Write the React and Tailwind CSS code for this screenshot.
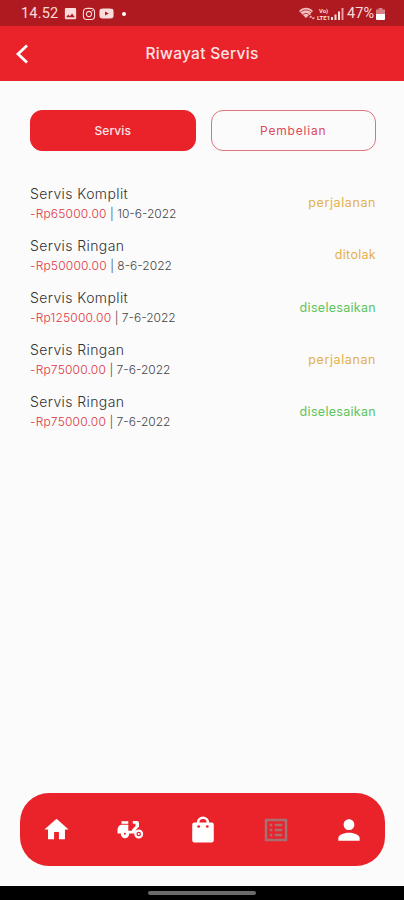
import React, { useState } from 'react';
import { MdHome, MdPerson, MdListAlt, MdImage } from 'react-icons/md';
import { FaInstagram, FaYoutube } from 'react-icons/fa';

const services = [
  { id: 1, name: 'Servis Komplit', price: '-Rp65000.00', date: '10-6-2022', status: 'perjalanan' },
  { id: 2, name: 'Servis Ringan', price: '-Rp50000.00', date: '8-6-2022', status: 'ditolak' },
  { id: 3, name: 'Servis Komplit', price: '-Rp125000.00', date: '7-6-2022', status: 'diselesaikan' },
  { id: 4, name: 'Servis Ringan', price: '-Rp75000.00', date: '7-6-2022', status: 'perjalanan' },
  { id: 5, name: 'Servis Ringan', price: '-Rp75000.00', date: '7-6-2022', status: 'diselesaikan' },
];

const statusStyle = {
  perjalanan: 'text-[#e3b04b] tracking-[0.6px]',
  ditolak: 'text-[#e3b04b] tracking-[0.3px]',
  diselesaikan: 'text-[#5cc45c] tracking-[0.3px]',
};

const ScooterIcon = () => (
  <svg className="w-[28px] h-[20px]" viewBox="0 0 28 20" fill="none">
    <path d="M5.500 1.200h6.800v2.600H5.500z" fill="white" />
    <path d="M5 4.800h7.300v6h3.400c.6-1.800 2.200-3.200 3.800-4.500V3.800h-2.700V1h4c1.400 0 2.200.8 2.200 2.200v3.600c-2.200 1.500-3.600 3.400-4.300 6.600H1.500V10C1.500 7.500 2.800 5.500 5 4.800z" fill="white" />
    <circle cx="9" cy="14" r="4.200" fill="white" />
    <circle cx="8.900" cy="13.800" r="1" fill="#ea232b" />
    <circle cx="22.700" cy="14" r="3.400" fill="#ea232b" stroke="white" strokeWidth="2.200" />
    <circle cx="22.700" cy="14" r="1.100" fill="white" />
  </svg>
);

const BagIcon = () => (
  <svg className="w-[28px] h-[30px]" viewBox="0 0 26 30" preserveAspectRatio="none" fill="none">
    <path d="M8.500 9V7.300a4.500 4.500 0 0 1 9 0V9" stroke="white" strokeWidth="2.400" />
    <path d="M5 7.500h16a2 2 0 0 1 2 2V25.500a2 2 0 0 1-2 2H5a2 2 0 0 1-2-2V9.500a2 2 0 0 1 2-2z" fill="white" />
    <circle cx="9" cy="11.500" r="1.300" fill="#ea232b" />
    <circle cx="17" cy="11.500" r="1.300" fill="#ea232b" />
  </svg>
);

const StatusBar = () => (
  <div className="h-[26px] bg-[#ae1a1f] flex items-center justify-between pl-[21px] pr-[19px] text-[#fbdcdc] font-[Roboto]">
    <div className="flex items-center pt-px">
      <span className="w-[42px] text-[14.5px] leading-[18px] tracking-[0.2px]">14.52</span>
      <MdImage className="w-[15px] h-[15px]" />
      <FaInstagram className="w-[14px] h-[14px] ml-[4px]" />
      <FaYoutube className="w-[15px] h-[15px] ml-[3px]" />
      <span className="w-[4px] h-[4px] rounded-full bg-white ml-[8px]" />
    </div>
    <div className="flex items-center pt-px">
      <svg className="w-[17px] h-[14px]" viewBox="0 0 17 14" fill="currentColor">
        <path d="M0 4C4-.3 10-.3 14 4l-2.500 2.600V8H10l-3 3z" opacity=".85" />
        <path d="M1.500 5.200c3.400-3 7.600-3 11 0M4 7.500c2-1.500 4-1.500 6 0" stroke="#ae1a1f" strokeWidth=".8" fill="none" />
        <path d="M10 10.500l2-2 1 2h3l-2 2-1-2z" />
      </svg>
      <span className="w-[15px] flex flex-col items-center text-[6px] leading-[7px] font-bold">
        <span>Vo)</span>
        <span>LTE1</span>
      </span>
      <svg className="w-[13px] h-[12px]" viewBox="0 0 13 12" fill="currentColor">
        <path d="M0 9h2v3H0zM3.500 6.500h2V12h-2zM7 3.500h2V12H7z" />
        <path d="M10.500 0h2v12h-2z" opacity=".7" />
      </svg>
      <span className="text-[14.5px] leading-[18px] ml-[3px]">47%</span>
      <svg className="w-[9px] h-[12px] ml-[2px]" viewBox="0 0 9 12">
        <path d="M2.500 0h4v1.500H9V6H0V1.500h2.500z" fill="#d98084" />
        <path d="M0 6h9v5a1 1 0 0 1-1 1H1a1 1 0 0 1-1-1z" fill="white" />
      </svg>
    </div>
  </div>
);

const App = () => {
  const [activeTab, setActiveTab] = useState('servis');

  const tabClass = (tab) =>
    `flex-1 h-[41px] rounded-[12px] border text-[12px] ${
      activeTab === tab
        ? 'bg-[#ea232b] border-[#ea232b] text-[#fde4e4] font-medium tracking-[0.1px]'
        : 'bg-transparent border-[#dd737c] text-[#dc4a5a] tracking-[0.8px]'
    }`;

  return (
    <div className="w-[404px] h-[900px] bg-[#fbfbfb] flex flex-col overflow-hidden font-[Inter,sans-serif]">
      <StatusBar />

      {/* Header */}
      <header className="h-[55px] bg-[#ea232b] grid grid-cols-[60px_1fr_60px] items-center">
        <button className="pl-[15px]">
          <svg className="w-[14px] h-[20px]" viewBox="0 0 14 20" fill="none">
            <path d="M12 1.500L3 10l9 8.500" stroke="white" strokeWidth="2.800" />
          </svg>
        </button>
        <h1 className="text-center text-[15.5px] font-medium text-[#fde4e4] tracking-[0.3px]">Riwayat Servis</h1>
      </header>

      <main className="flex-1 pl-[30px] pr-[28px] pt-[29px]">
        {/* Tabs */}
        <div className="flex gap-[15px]">
          <button className={tabClass('servis')} onClick={() => setActiveTab('servis')}>Servis</button>
          <button className={tabClass('pembelian')} onClick={() => setActiveTab('pembelian')}>Pembelian</button>
        </div>

        {/* Service list */}
        <ul className="mt-[32.5px] space-y-[12.2px]">
          {services.map((item) => (
            <li key={item.id} className="h-[40px] flex items-center justify-between">
              <div>
                <p className="text-[14px] leading-[19px] font-light text-[#333333] tracking-[0.4px]">{item.name}</p>
                <p className="text-[12px] leading-[21px] font-light text-[#444444]">
                  <span className="text-[#e0343f] tracking-[0.2px]">{item.price}</span> | {item.date}
                </p>
              </div>
              <span className={`text-[12.5px] ${statusStyle[item.status]}`}>{item.status}</span>
            </li>
          ))}
        </ul>
      </main>

      {/* Bottom navigation */}
      <nav className="h-[73px] ml-[20px] mr-[19px] mb-[20px] rounded-[29px] bg-[#ea232b] flex items-center text-white">
        <button className="flex-1 flex justify-center"><MdHome className="w-[29px] h-[29px]" /></button>
        <button className="flex-1 flex justify-center"><ScooterIcon /></button>
        <button className="flex-1 flex justify-center"><BagIcon /></button>
        <button className="flex-1 flex justify-center"><MdListAlt className="w-[30px] h-[30px] text-[#a5706f]" /></button>
        <button className="flex-1 flex justify-center"><MdPerson className="w-[32px] h-[32px]" /></button>
      </nav>

      <div className="h-[14px] bg-black flex justify-center pt-[5px]">
        <div className="w-[108px] h-[4px] rounded-full bg-[#6b6b6b]" />
      </div>
    </div>
  );
};

export default App;
